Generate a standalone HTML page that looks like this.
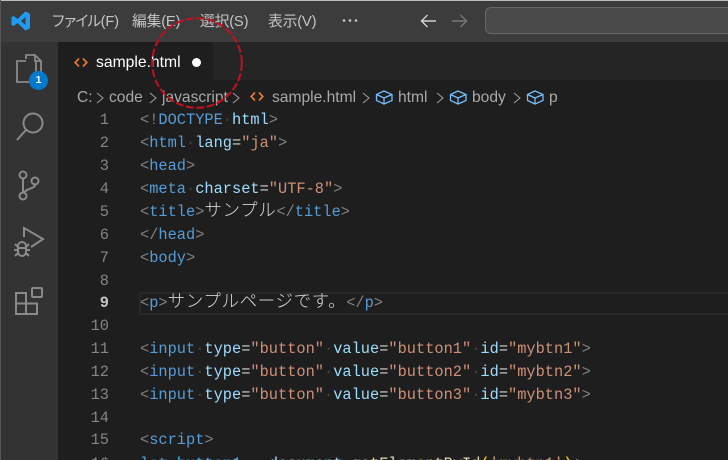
<!DOCTYPE html>
<html lang="ja"><head><meta charset="utf-8"><title>VS Code</title>
<style>
html,body{margin:0;padding:0;background:#1e1e1e}
#r{position:relative;width:728px;height:460px;overflow:hidden;background:#1e1e1e;font-family:"Liberation Sans","Noto Sans CJK JP",sans-serif}
.a{position:absolute;white-space:pre}
.m{font-size:14.8px;color:#c4c4c4;top:12px;line-height:20px;letter-spacing:-.2px}
.ln{position:absolute;width:48px;left:61px;text-align:right;font:15.33px/23px "Liberation Mono",monospace;color:#858585}
.c{position:absolute;left:140px;font:15.33px/23px "Liberation Mono","Noto Sans CJK JP",monospace;color:#d4d4d4;white-space:pre}
.j{font-size:17.5px;line-height:0;letter-spacing:.62px;font-weight:300;font-family:"Noto Sans CJK JP",sans-serif}
.g{color:#808080}.b{color:#569cd6}.l{color:#9cdcfe}.s{color:#ce9178}.w{color:#d4d4d4}.d{color:#444}
.y{color:#dcdcaa}.v{color:#4fc1ff}.h{color:#ffd700}
.bc{font-size:15.6px;color:#a9a9a9;top:88px;line-height:20px}
</style></head><body><div id="r">
<div class="a" style="left:0;top:0;width:728px;height:42px;background:#3c3c3c"></div>
<div class="a" style="left:0;top:0;width:728px;height:1px;background:#bdbdbd"></div>
<div class="a" style="left:0;top:42px;width:58px;height:418px;background:#333"></div>
<div class="a" style="left:58px;top:42px;width:670px;height:38px;background:#252526"></div>
<div class="a" style="left:58px;top:42px;width:155px;height:38px;background:#1e1e1e"></div>
<div class="a" style="left:0;top:0;width:1px;height:460px;background:#555"></div>

<svg class="a" style="left:10px;top:10px" width="22" height="22" viewBox="0 0 22 22"><path d="M15.5 1.5 20 3.6V18.4L15.5 20.5 7.5 13 3.6 16 1.5 15V7L3.6 6 7.5 9ZM15.5 7 10.8 11 15.5 15Z" fill="#1f9cf0"/></svg>
<div class="a m" style="left:51px"><span style="letter-spacing:-2.9px">ファイル</span><span style="margin-left:2px">(F)</span></div>
<div class="a m" style="left:132px">編集(E)</div>
<div class="a m" style="left:200px">選択(S)</div>
<div class="a m" style="left:268px">表示(V)</div>
<svg class="a" style="left:342px;top:18px" width="18" height="5"><circle cx="2" cy="2.5" r="1.3" fill="#ccc"/><circle cx="8" cy="2.5" r="1.3" fill="#ccc"/><circle cx="14" cy="2.5" r="1.3" fill="#ccc"/></svg>
<svg class="a" style="left:419px;top:12px" width="20" height="18" fill="none" stroke="#d0d0d0" stroke-width="1.4"><path d="M2.500 9H17M8.500 3 2.500 9l6 6"/></svg>
<svg class="a" style="left:450px;top:12px" width="20" height="18" fill="none" stroke="#777" stroke-width="1.4"><path d="M2 9H16.500M10.500 3l6 6-6 6"/></svg>
<div class="a" style="left:485px;top:7px;width:260px;height:27px;box-sizing:border-box;background:#4a4a4a;border:1px solid #666;border-radius:6px"></div>

<svg class="a" style="left:14px;top:53px" width="30" height="34" fill="none" stroke="#8a8a8a" stroke-width="1.800"><path d="M12 6V2H21L27 8V25H22"/><path d="M21 2V8H27"/><path d="M12 8H3V29H22V9"/></svg>
<div class="a" style="left:29px;top:71px;width:19px;height:19px;border-radius:50%;background:#007acc;color:#fff;font:bold 10.500px/19px 'Liberation Sans',sans-serif;text-align:center">1</div>
<svg class="a" style="left:14px;top:109px" width="32" height="34" fill="none" stroke="#8a8a8a" stroke-width="2"><circle cx="19" cy="14" r="9.500"/><path d="M12 21 3 31"/></svg>
<svg class="a" style="left:16px;top:168px" width="28" height="34" fill="none" stroke="#8a8a8a" stroke-width="2"><circle cx="7" cy="7" r="3.500"/><circle cx="7" cy="28" r="3.500"/><circle cx="19" cy="13" r="3.500"/><path d="M7 11V24M19 17C19 21 10 20 8 25"/></svg>
<svg class="a" style="left:13px;top:226px" width="32" height="34" fill="none" stroke="#8a8a8a" stroke-width="2"><path d="M11 11V2L30 13 18 21"/><path d="M5 20a4 4 0 0 1 8 0v6a4 4 0 0 1-8 0ZM5 22H13M2 18 5 21M16 18 13 21M1 24H5M13 24H17M2 30 5 27M16 30 13 27"/></svg>
<svg class="a" style="left:13px;top:284px" width="32" height="34" fill="none" stroke="#8a8a8a" stroke-width="2"><path d="M3 9H13V30H3ZM3 19.500H24V30H13"/><rect x="19" y="4" width="10" height="9" rx="1"/></svg>

<svg class="a" style="left:74px;top:57px" width="14" height="12" fill="none" stroke="#e37933" stroke-width="1.700"><path d="M5 1.500 1.200 5.500 5 9.500M9 1.500 12.800 5.500 9 9.500"/></svg>
<div class="a" style="left:96px;top:53px;font-size:15.700px;line-height:20px;color:#fff">sample.html</div>
<div class="a" style="left:191.500px;top:57.500px;width:9px;height:9px;border-radius:50%;background:#fff"></div>

<div class="a bc" style="left:77px">C:</div>
<svg class="a" style="left:95px;top:91px" width="10" height="14" fill="none" stroke="#a0a0a0"><path d="M2 2 8 7 2 12"/></svg>
<div class="a bc" style="left:109px">code</div>
<svg class="a" style="left:148px;top:91px" width="10" height="14" fill="none" stroke="#a0a0a0"><path d="M2 2 8 7 2 12"/></svg>
<div class="a bc" style="left:162px">javascript</div>
<svg class="a" style="left:231px;top:91px" width="10" height="14" fill="none" stroke="#a0a0a0"><path d="M2 2 8 7 2 12"/></svg>
<svg class="a" style="left:250px;top:91px" width="14" height="12" fill="none" stroke="#e37933" stroke-width="1.700"><path d="M5 1.500 1.200 5.500 5 9.500M9 1.500 12.800 5.500 9 9.500"/></svg>
<div class="a bc" style="left:272px">sample.html</div>
<svg class="a" style="left:361px;top:91px" width="10" height="14" fill="none" stroke="#a0a0a0"><path d="M2 2 8 7 2 12"/></svg>
<svg class="a" style="left:375px;top:89px" width="18" height="17" fill="none" stroke="#75beff" stroke-width="1.300"><path d="M9 2 17 5.500V11.500L9 15 1.500 11.500V5.500ZM1.500 5.500 9 9 17 5.500M9 9V15"/></svg>
<div class="a bc" style="left:398px">html</div>
<svg class="a" style="left:435px;top:91px" width="10" height="14" fill="none" stroke="#a0a0a0"><path d="M2 2 8 7 2 12"/></svg>
<svg class="a" style="left:449px;top:89px" width="18" height="17" fill="none" stroke="#75beff" stroke-width="1.300"><path d="M9 2 17 5.500V11.500L9 15 1.500 11.500V5.500ZM1.500 5.500 9 9 17 5.500M9 9V15"/></svg>
<div class="a bc" style="left:472px">body</div>
<svg class="a" style="left:512px;top:91px" width="10" height="14" fill="none" stroke="#a0a0a0"><path d="M2 2 8 7 2 12"/></svg>
<svg class="a" style="left:526px;top:89px" width="18" height="17" fill="none" stroke="#75beff" stroke-width="1.300"><path d="M9 2 17 5.500V11.500L9 15 1.500 11.500V5.500ZM1.500 5.500 9 9 17 5.500M9 9V15"/></svg>
<div class="a bc" style="left:549px">p</div>

<div class="a" style="left:139px;top:292px;width:600px;height:23px;box-sizing:border-box;border:2px solid #282828"></div>

<div class="ln" style="top:109px">1</div><div class="c" style="top:109px"><span class="g">&lt;</span><span class="g">!</span><span class="b">DOCTYPE</span><span class="d">·</span><span class="l">html</span><span class="g">&gt;</span></div>
<div class="ln" style="top:132px">2</div><div class="c" style="top:132px"><span class="g">&lt;</span><span class="b">html</span><span class="d">·</span><span class="l">lang</span>=<span class="s">"ja"</span><span class="g">&gt;</span></div>
<div class="ln" style="top:155px">3</div><div class="c" style="top:155px"><span class="g">&lt;</span><span class="b">head</span><span class="g">&gt;</span></div>
<div class="ln" style="top:178px">4</div><div class="c" style="top:178px"><span class="g">&lt;</span><span class="b">meta</span><span class="d">·</span><span class="l">charset</span>=<span class="s">"UTF-8"</span><span class="g">&gt;</span></div>
<div class="ln" style="top:201px">5</div><div class="c" style="top:201px"><span class="g">&lt;</span><span class="b">title</span><span class="g">&gt;</span><span class="j">サンプル</span><span class="g">&lt;/</span><span class="b">title</span><span class="g">&gt;</span></div>
<div class="ln" style="top:224px">6</div><div class="c" style="top:224px"><span class="g">&lt;/</span><span class="b">head</span><span class="g">&gt;</span></div>
<div class="ln" style="top:247px">7</div><div class="c" style="top:247px"><span class="g">&lt;</span><span class="b">body</span><span class="g">&gt;</span></div>
<div class="ln" style="top:270px">8</div>
<div class="ln" style="top:292px;color:#c6c6c6;font-weight:bold">9</div><div class="c" style="top:292px"><span class="g">&lt;</span><span class="b">p</span><span class="g">&gt;</span><span class="j">サンプルページです。</span><span class="g">&lt;/</span><span class="b">p</span><span class="g">&gt;</span></div>
<div class="ln" style="top:315px">10</div>
<div class="ln" style="top:338px">11</div><div class="c" style="top:338px"><span class="g">&lt;</span><span class="b">input</span><span class="d">·</span><span class="l">type</span>=<span class="s">"button"</span><span class="d">·</span><span class="l">value</span>=<span class="s">"button1"</span><span class="d">·</span><span class="l">id</span>=<span class="s">"mybtn1"</span><span class="g">&gt;</span></div>
<div class="ln" style="top:361px">12</div><div class="c" style="top:361px"><span class="g">&lt;</span><span class="b">input</span><span class="d">·</span><span class="l">type</span>=<span class="s">"button"</span><span class="d">·</span><span class="l">value</span>=<span class="s">"button2"</span><span class="d">·</span><span class="l">id</span>=<span class="s">"mybtn2"</span><span class="g">&gt;</span></div>
<div class="ln" style="top:384px">13</div><div class="c" style="top:384px"><span class="g">&lt;</span><span class="b">input</span><span class="d">·</span><span class="l">type</span>=<span class="s">"button"</span><span class="d">·</span><span class="l">value</span>=<span class="s">"button3"</span><span class="d">·</span><span class="l">id</span>=<span class="s">"mybtn3"</span><span class="g">&gt;</span></div>
<div class="ln" style="top:407px">14</div>
<div class="ln" style="top:429px">15</div><div class="c" style="top:429px"><span class="g">&lt;</span><span class="b">script</span><span class="g">&gt;</span></div>
<div class="ln" style="top:453px">16</div><div class="c" style="top:453px"><span class="b">let</span> <span class="v">button1</span> = <span class="l">document</span>.<span class="y">getElementById</span><span class="h">(</span><span class="s">'mybtn1'</span><span class="h">)</span>;</div>

<svg class="a" style="left:145px;top:10px" width="104" height="106" fill="none"><circle cx="52" cy="53" r="44.800" stroke="#c4101e" stroke-width="2" stroke-dasharray="8 2.500"/></svg>
</div></body></html>
